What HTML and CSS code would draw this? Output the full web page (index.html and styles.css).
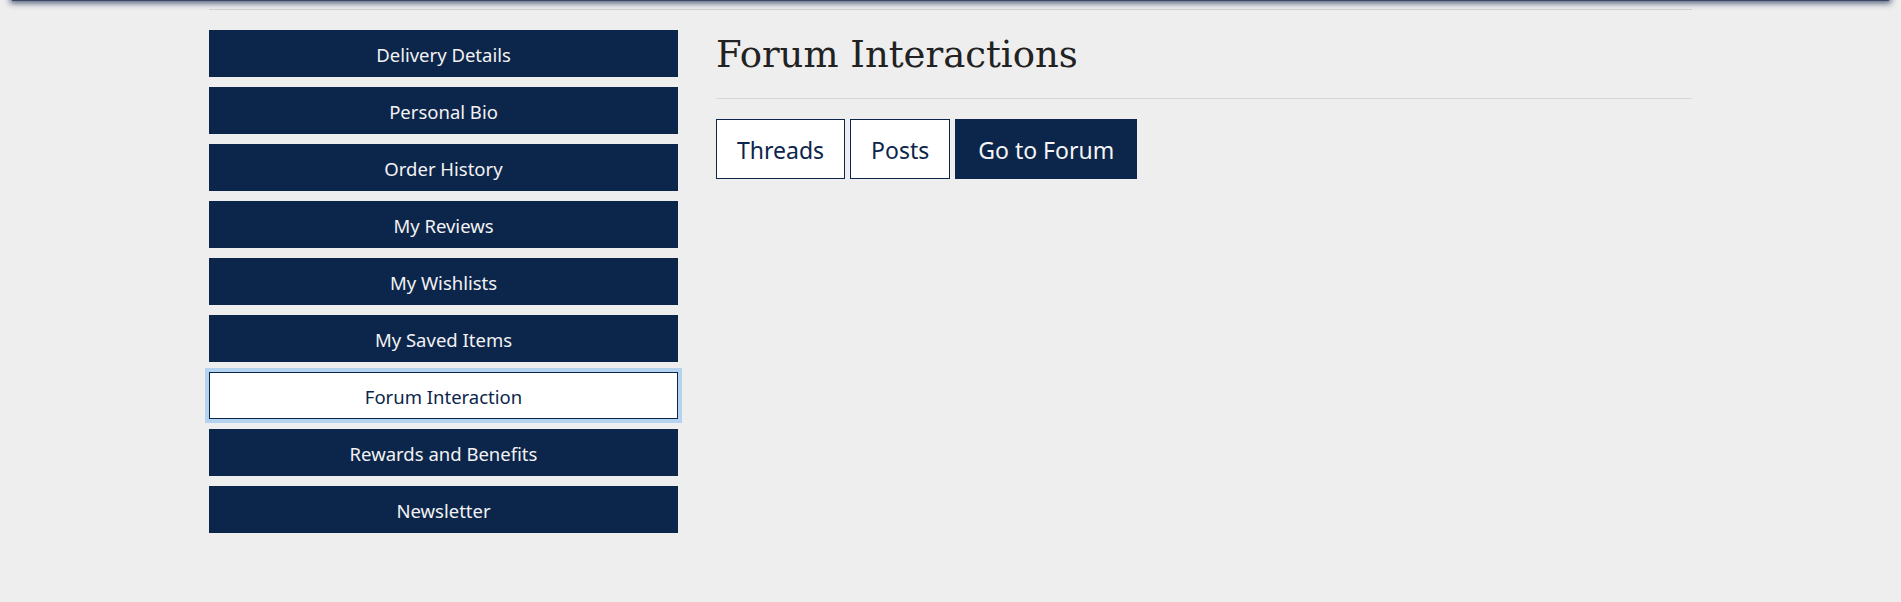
FILE: index.html
```html
<!DOCTYPE html>
<html lang="en">
<head>
<meta charset="utf-8">
<title>Forum Interactions</title>
<link rel="stylesheet" href="styles.css">
</head>
<body>
<div class="topbar"></div>
<div class="container">
  <aside class="sidebar">
    <button class="nav-btn">Delivery Details</button>
    <button class="nav-btn">Personal Bio</button>
    <button class="nav-btn">Order History</button>
    <button class="nav-btn">My Reviews</button>
    <button class="nav-btn">My Wishlists</button>
    <button class="nav-btn">My Saved Items</button>
    <button class="nav-btn active">Forum Interaction</button>
    <button class="nav-btn">Rewards and Benefits</button>
    <button class="nav-btn">Newsletter</button>
  </aside>
  <main class="content">
    <h1 class="title">Forum Interactions</h1>
    <hr class="divider">
    <div class="tabs">
      <button class="tab">Threads</button>
      <button class="tab">Posts</button>
      <button class="tab primary">Go to Forum</button>
    </div>
  </main>
</div>
</body>
</html>
```
FILE: styles.css
```css
html, body {
  margin: 0;
  padding: 0;
  background: #eeeeee;
}
body {
  font-family: "Noto Sans", "Open Sans", sans-serif;
  overflow: hidden;
}
.topbar {
  height: 4px;
  margin: -3px 12px 0;
  background: #3b4868;
  box-shadow: 0 0 6px 2px rgba(40, 55, 90, 0.85);
}
.container {
  width: 1483px;
  margin: 8px auto 0;
  border-top: 1px solid #cfcfcf;
  display: grid;
  grid-template-columns: 469px 1fr;
  column-gap: 38px;
  align-items: start;
}
.sidebar {
  padding-top: 20px;
  display: flex;
  flex-direction: column;
  gap: 10px;
}
.nav-btn {
  height: 47px;
  border: 1px solid #0c254b;
  background: #0c254b;
  color: #f2f2f2;
  font-family: inherit;
  font-size: 18.5px;
  padding: 2px 0 0;
  cursor: pointer;
}
.nav-btn.active {
  background: #ffffff;
  color: #0c254b;
  outline: 4px solid #b4d3f1;
}
.content {
  padding-top: 21px;
}
.title {
  margin: 0;
  font-family: "DejaVu Serif", "Liberation Serif", serif;
  font-weight: normal;
  font-size: 37px;
  line-height: 48px;
  color: #222222;
}
.divider {
  margin: 19px 0 0;
  border: 0;
  border-top: 1px solid #d6d6d6;
  height: 0;
}
.tabs {
  margin-top: 20px;
  display: flex;
  gap: 5px;
}
.tab {
  height: 60px;
  padding: 2px 20px 0;
  border: 1px solid #0c254b;
  background: #ffffff;
  color: #0c254b;
  font-family: inherit;
  font-size: 23px;
  cursor: pointer;
}
.tab.primary {
  padding: 2px 22px 0;
  background: #0c254b;
  color: #f5f5f5;
}
```
